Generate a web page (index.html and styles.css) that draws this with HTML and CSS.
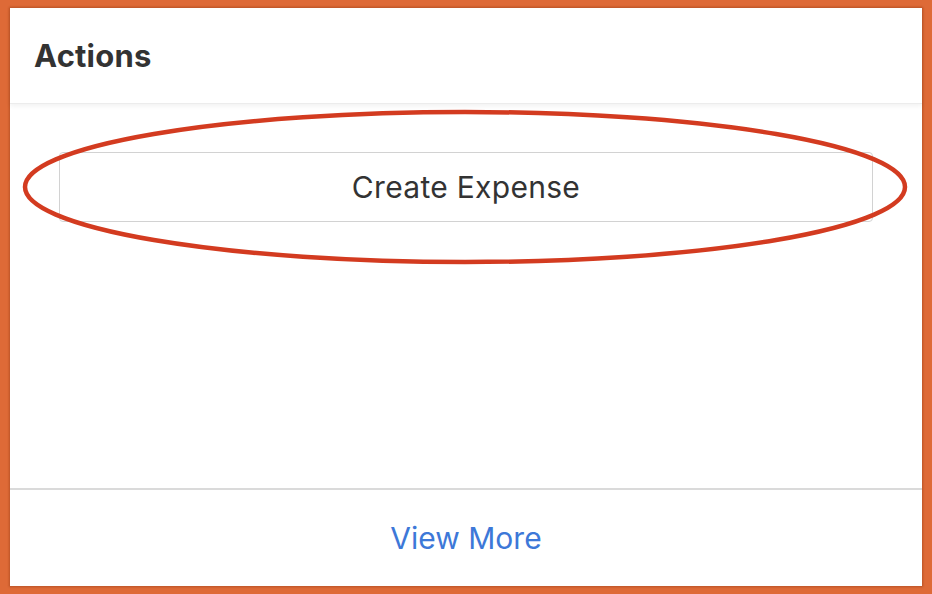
FILE: index.html
```html
<!DOCTYPE html>
<html lang="en">
<head>
<meta charset="utf-8">
<title>Actions</title>
<link rel="stylesheet" href="styles.css">
</head>
<body>
<div class="panel">
  <header class="panel-header">
    <h2 class="panel-title">Actions</h2>
  </header>
  <main class="panel-body">
    <button class="action-btn" type="button">Create Expense</button>
  </main>
  <footer class="panel-footer">
    <a class="view-more" href="#">View More</a>
  </footer>
</div>
<svg class="highlight" width="932" height="594" viewBox="0 0 932 594" aria-hidden="true">
  <ellipse cx="465" cy="187" rx="440" ry="75" fill="none" stroke="#d33b20" stroke-width="4.5"/>
</svg>
</body>
</html>
```
FILE: styles.css
```css
* { box-sizing: border-box; }
html, body {
  margin: 0;
  padding: 0;
}
body {
  width: 932px;
  height: 594px;
  background: #de6a37;
  padding: 8px 10px 8px 10px;
  position: relative;
  overflow: hidden;
  font-family: Inter, "Noto Sans", "Liberation Sans", sans-serif;
}
.panel {
  width: 912px;
  height: 578px;
  background: #ffffff;
  box-shadow: 0 0 2px 1px rgba(120, 40, 10, 0.35);
  display: flex;
  flex-direction: column;
}
.panel-header {
  height: 96px;
  display: flex;
  align-items: center;
  padding-left: 24px;
  border-bottom: 1px solid #ececec;
  box-shadow: 0 2px 5px rgba(0, 0, 0, 0.06);
  position: relative;
  z-index: 1;
}
.panel-title {
  margin: 0;
  font-size: 31px;
  font-weight: 700;
  color: #333333;
  letter-spacing: 0.2px;
}
.panel-body {
  flex: 1;
  padding: 48px 49px 0 49px;
}
.action-btn {
  display: block;
  width: 100%;
  height: 70px;
  background: #ffffff;
  border: 1.5px solid #d2d2d2;
  border-radius: 4px;
  font-family: inherit;
  font-size: 30px;
  letter-spacing: 0.3px;
  font-weight: 400;
  color: #333333;
  padding: 0;
}
.panel-footer {
  height: 98px;
  border-top: 2px solid #dadada;
  display: flex;
  align-items: center;
  justify-content: center;
}
.view-more {
  font-size: 30px;
  color: #3d78d8;
  text-decoration: none;
}
.highlight {
  position: absolute;
  left: 0;
  top: 0;
  pointer-events: none;
}
```
